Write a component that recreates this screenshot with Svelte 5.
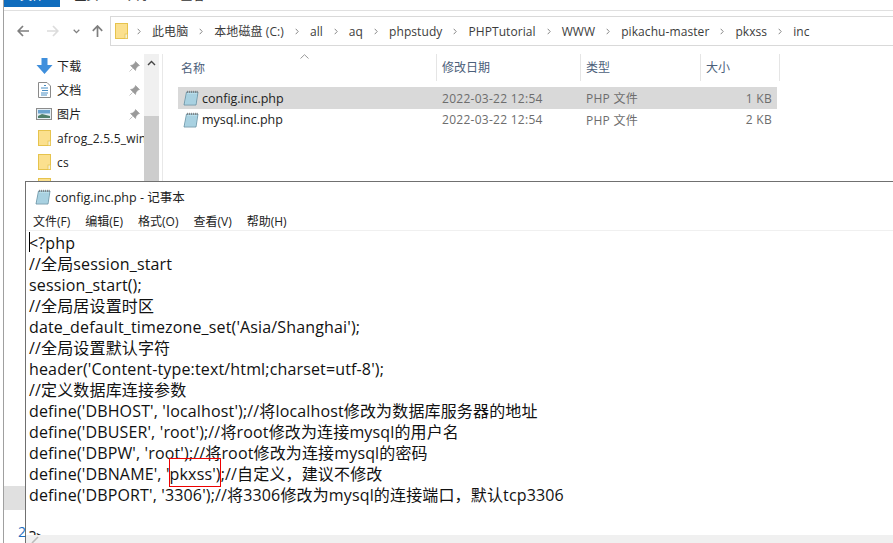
<script>
    const tabs = ['文件', '主页', '共享', '查看'];

    const crumbs = ['此电脑', '本地磁盘 (C:)', 'all', 'aq', 'phpstudy', 'PHPTutorial', 'WWW', 'pikachu-master', 'pkxss', 'inc'];

    const quick = [
        { name: '下载', icon: 'down', pin: true },
        { name: '文档', icon: 'doc', pin: true },
        { name: '图片', icon: 'pic', pin: true },
        { name: 'afrog_2.5.5_win', icon: 'folder' },
        { name: 'cs', icon: 'folder' },
        { name: 'CaroDrvHelp', icon: 'folder' }
    ];

    const files = [
        { name: 'config.inc.php', date: '2022-03-22 12:54', type: 'PHP 文件', size: '1 KB', selected: true },
        { name: 'mysql.inc.php', date: '2022-03-22 12:54', type: 'PHP 文件', size: '2 KB' }
    ];

    const menus = ['文件(F)', '编辑(E)', '格式(O)', '查看(V)', '帮助(H)'];

    const lines = [
        '<?php',
        '//全局session_start',
        'session_start();',
        '//全局居设置时区',
        "date_default_timezone_set('Asia/Shanghai');",
        '//全局设置默认字符',
        "header('Content-type:text/html;charset=utf-8');",
        '//定义数据库连接参数',
        "define('DBHOST', 'localhost');//将localhost修改为数据库服务器的地址",
        "define('DBUSER', 'root');//将root修改为连接mysql的用户名",
        "define('DBPW', 'root');//将root修改为连接mysql的密码",
        "define('DBNAME', 'pkxss');//自定义，建议不修改",
        "define('DBPORT', '3306');//将3306修改为mysql的连接端口，默认tcp3306",
        '',
        '?>'
    ];
</script>

{#snippet notepadIcon()}
    <svg class="file-icon" width="16" height="16" viewBox="0 0 16 16">
        <path d="M3.5 2 H15 L13 15 H1 Z" fill="#b9dde9" stroke="#5f8ca0" stroke-width=".8" />
        <path d="M3.6 5 H13.8 M3.2 7 H13.5 M2.9 9 H13.2 M2.6 11 H12.9 M2.3 13 H12.6" stroke="#8fc0d4" stroke-width=".8" />
        <path d="M4.5 .8 V3 M6.5 .8 V3 M8.5 .8 V3 M10.5 .8 V3 M12.5 .8 V3 M14.2 .8 V3" stroke="#777" stroke-width=".8" />
    </svg>
{/snippet}

{#snippet folderIcon()}
    <svg width="13" height="16" viewBox="0 0 13 16">
        <rect x=".5" y=".5" width="12" height="15" fill="#fbe08e" stroke="#e6c34d" />
        <rect x="10" y="11" width="2.5" height="4.5" fill="#f4f0d8" stroke="#e6c34d" stroke-width=".7" />
    </svg>
{/snippet}

<div class="screen">
    <div class="explorer">
        <div class="ribbon">
            {#each tabs as tab, i}
                <span class="tab" class:active={i === 0}><span class="tab-text">{tab}</span></span>
            {/each}
        </div>
        <div class="toolbar">
            <div class="nav">
                <svg width="12" height="12" viewBox="0 0 12 12"><path d="M6 1 L1.2 6 L6 11 M1.5 6 H12" fill="none" stroke="#7f7f7f" stroke-width="1.7" /></svg>
                <svg class="forward" width="12" height="12" viewBox="0 0 12 12"><path d="M6 1 L10.8 6 L6 11 M10.5 6 H0" fill="none" stroke="#dcdcdc" stroke-width="1.7" /></svg>
                <svg width="7" height="5" viewBox="0 0 7 5"><path d="M.7 .8 L3.5 3.6 L6.3 .8" fill="none" stroke="#808080" stroke-width="1.3" /></svg>
                <svg class="up" width="11" height="12" viewBox="0 0 11 12"><path d="M.8 5.8 L5.5 1 L10.2 5.8 M5.5 1.3 V12" fill="none" stroke="#7f7f7f" stroke-width="1.7" /></svg>
            </div>
            <div class="address">
                <span class="addr-folder">{@render folderIcon()}</span>
                {#each crumbs as crumb}
                    <svg class="sep" width="4" height="7" viewBox="0 0 4 7"><path d="M.7 .8 L3.2 3.5 L.7 6.2" fill="none" stroke="#888" stroke-width="1" /></svg>
                    <span class="crumb">{crumb}</span>
                {/each}
            </div>
        </div>
        <div class="body">
            <div class="sidebar">
                <div class="tree">
                    {#each quick as item}
                        <div class="tree-item">
                            <span class="tree-icon">
                                {#if item.icon === 'down'}
                                    <svg width="17" height="16" viewBox="0 0 17 16"><path d="M5.5 0 H11.5 V7 H16.5 L8.5 16 L.5 7 H5.5 Z" fill="#3f8fdc" /></svg>
                                {:else if item.icon === 'doc'}
                                    <svg width="13" height="16" viewBox="0 0 13 16"><path d="M.5 .5 H9 L12.5 4 V15.5 H.5 Z" fill="#fff" stroke="#8a8a8a" /><path d="M6 3.5 H8 M3 6 H10 M4 8.5 H10 M3 11 H10 M3 13 H9" stroke="#4a8fc4" /></svg>
                                {:else if item.icon === 'pic'}
                                    <svg width="16" height="12" viewBox="0 0 16 12"><rect x=".5" y=".5" width="15" height="11" fill="#e4eef4" stroke="#8c8c8c" /><rect x="2" y="2" width="12" height="3.5" fill="#6aa3cf" /><path d="M2 8 L6 6 L14 8 V10 H2 Z" fill="#4f7f6a" /></svg>
                                {:else}
                                    {@render folderIcon()}
                                {/if}
                            </span>
                            <span class="tree-name">{item.name}</span>
                            {#if item.pin}
                                <svg class="pin" width="11" height="11" viewBox="0 0 11 11"><path d="M6.5 .5 L10.5 4.5 L9 5 L7 7.5 L6.5 9.5 L1.5 4.5 L3.5 4 L6 2 Z M3.5 7.5 L.5 10.5" fill="#9a9a9a" stroke="#9a9a9a" stroke-width=".6" /></svg>
                            {/if}
                        </div>
                    {/each}
                </div>
                <div class="scrollbar">
                    <svg width="9" height="6" viewBox="0 0 9 6"><path d="M1 5 L4.5 1.5 L8 5" fill="none" stroke="#444" stroke-width="1.4" /></svg>
                    <div class="thumb"></div>
                </div>
            </div>
            <div class="list">
                <div class="list-head">
                    <span class="col-name">名称</span>
                    <svg class="sort" width="9" height="5" viewBox="0 0 9 5"><path d="M.5 4.5 L4.5 .7 L8.5 4.5" fill="none" stroke="#999" /></svg>
                    <span class="col-date">修改日期</span>
                    <span class="col-type">类型</span>
                    <span class="col-size">大小</span>
                </div>
                {#each files as file}
                    <div class="row" class:selected={file.selected}>
                        <span class="col-name cell-name">{@render notepadIcon()}{file.name}</span>
                        <span class="col-date">{file.date}</span>
                        <span class="col-type">{file.type}</span>
                        <span class="size-val">{file.size}</span>
                    </div>
                {/each}
            </div>
        </div>
    </div>

    <div class="notepad">
        <div class="title">{@render notepadIcon()}<span>config.inc.php - 记事本</span></div>
        <div class="menu">
            {#each menus as m}
                <span>{m}</span>
            {/each}
        </div>
        <div class="editor">
            <i class="caret"></i>
            {#each lines as line}
                <div class="line">{line || '\u00a0'}</div>
            {/each}
            <i class="mark"></i>
        </div>
        <div class="hscroll">
            <svg width="8" height="8" viewBox="0 0 8 8"><path d="M1 8 L7 2" stroke="#bbb" stroke-width="1.6" /></svg>
        </div>
    </div>

    <div class="stray">2</div>
    <div class="stray-band"></div>
</div>

<style>
    :global(body) {
        margin: 0;
        background: #fff;
    }
    .screen {
        position: relative;
        width: 893px;
        height: 543px;
        overflow: hidden;
        font-family: "Open Sans", "Noto Sans CJK SC", sans-serif;
        background: #fff;
    }
    .explorer {
        margin-left: 3px;
        height: 543px;
        border-left: 1px solid #a0a0a0;
    }
    .ribbon {
        display: flex;
        height: 10px;
        border-bottom: 1px solid #e0e0e0;
        overflow: hidden;
    }
    .tab {
        width: 53px;
        height: 7px;
        overflow: hidden;
        text-align: center;
        font-size: 12px;
        line-height: 12px;
        color: #333;
    }
    .tab.active {
        width: 56px;
        background: #0f6cbd;
        color: #fff;
    }
    .tab-text {
        display: block;
        margin-top: -10px;
    }
    .toolbar {
        display: flex;
        align-items: center;
        height: 30px;
        margin-top: 5px;
        padding-bottom: 8px;
    }
    .nav {
        display: flex;
        align-items: center;
        gap: 14px;
        width: 106px;
        padding-left: 13px;
        box-sizing: border-box;
    }
    .forward {
        margin-left: 4px;
    }
    .up {
        margin-left: -2px;
    }
    .address {
        flex: 1;
        display: flex;
        align-items: center;
        height: 30px;
        border: 1px solid #d9d9d9;
        border-right: none;
        box-sizing: border-box;
        padding-left: 4px;
        font-size: 12px;
        letter-spacing: .08px;
        color: #3c3c3c;
        white-space: nowrap;
    }
    .addr-folder {
        display: flex;
        margin-right: -2px;
    }
    .sep {
        flex: none;
        margin: 0 11px 0 11px;
    }
    .body {
        display: flex;
    }
    .sidebar {
        display: flex;
        flex: none;
        width: 159px;
        height: 480px;
        border-right: 1px solid #e8e8e8;
        box-sizing: border-box;
    }
    .tree {
        width: 140px;
        overflow: hidden;
        padding-left: 30px;
        box-sizing: border-box;
    }
    .tree-item {
        display: flex;
        align-items: center;
        height: 24px;
        font-size: 12px;
        letter-spacing: .2px;
        color: #222;
        white-space: nowrap;
    }
    .tree-icon {
        display: flex;
        justify-content: center;
        flex: none;
        width: 20px;
        margin-right: 3px;
    }
    .tree-name {
        flex: 1;
    }
    .pin {
        margin-right: 4px;
    }
    .scrollbar {
        width: 15px;
        text-align: center;
        background: #f0f0f0;
        font-size: 0;
    }
    .scrollbar svg {
        margin: 6px 0 8px;
    }
    .thumb {
        height: 320px;
        margin-top: 42px;
        background: #cdcdcd;
    }
    .list {
        flex: 1;
        padding-left: 15px;
        font-size: 12px;
    }
    .list-head {
        position: relative;
        display: flex;
        align-items: center;
        height: 27px;
        margin-bottom: 6px;
        color: #4c607a;
    }
    .col-name {
        flex: none;
        width: 258px;
        padding-left: 3px;
        box-sizing: border-box;
    }
    .col-date {
        flex: none;
        width: 144px;
        padding-left: 6px;
        box-sizing: border-box;
    }
    .col-type {
        flex: none;
        width: 120px;
        padding-left: 6px;
        box-sizing: border-box;
    }
    .col-size {
        flex: none;
        width: 80px;
        padding-left: 5px;
        box-sizing: border-box;
    }
    .list-head .col-date, .list-head .col-type, .list-head .col-size {
        height: 27px;
        line-height: 27px;
        padding-left: 5px;
        border-left: 1px solid #e5e5e5;
    }
    .list-head .col-size {
        border-right: 1px solid #e5e5e5;
    }
    .sort {
        position: absolute;
        left: 122px;
        top: 0;
    }
    .row {
        display: flex;
        align-items: center;
        width: 599px;
        height: 21px;
        letter-spacing: .27px;
        color: #6d6d6d;
    }
    .row.selected {
        height: 22px;
        background: #d9d9d9;
    }
    .cell-name {
        display: flex;
        align-items: center;
        gap: 3px;
        padding-left: 5px;
        font-size: 12.5px;
        letter-spacing: 0;
        color: #222;
    }
    .size-val {
        flex: 1;
        text-align: right;
        padding-right: 5px;
    }
    .notepad {
        position: absolute;
        left: 25px;
        top: 181px;
        width: 880px;
        height: 370px;
        border: 1px solid #707070;
        background: #fff;
        box-sizing: border-box;
    }
    .title {
        display: flex;
        align-items: center;
        gap: 4px;
        height: 29px;
        padding-left: 9px;
        font-size: 12.5px;
        color: #222;
    }
    .menu {
        display: flex;
        align-items: center;
        gap: 15px;
        height: 19px;
        padding-left: 7px;
        font-size: 12px;
        color: #222;
        border-bottom: 1px solid #f0f0f0;
    }
    .editor {
        position: relative;
        padding: 2px 0 0 3px;
        font-size: 16px;
        letter-spacing: .15px;
        line-height: 21px;
        color: #111;
    }
    .line {
        white-space: pre;
    }
    .caret {
        position: absolute;
        left: 3px;
        top: 1px;
        width: 1px;
        height: 20px;
        background: #000;
    }
    .mark {
        position: absolute;
        left: 143px;
        top: 227px;
        width: 52px;
        height: 29px;
        border: 1px solid #e00;
        box-sizing: border-box;
    }
    .hscroll {
        position: absolute;
        left: 0;
        top: 353px;
        width: 100%;
        height: 17px;
        padding-left: 5px;
        box-sizing: border-box;
        background: #f0f0f0;
        font-size: 0;
    }
    .stray {
        position: absolute;
        left: 18px;
        top: 522px;
        font-size: 14px;
        color: #1f6fc0;
    }
    .stray-band {
        position: absolute;
        left: 4px;
        top: 486px;
        width: 21px;
        height: 24px;
        background: #e0e0e0;
    }
</style>
